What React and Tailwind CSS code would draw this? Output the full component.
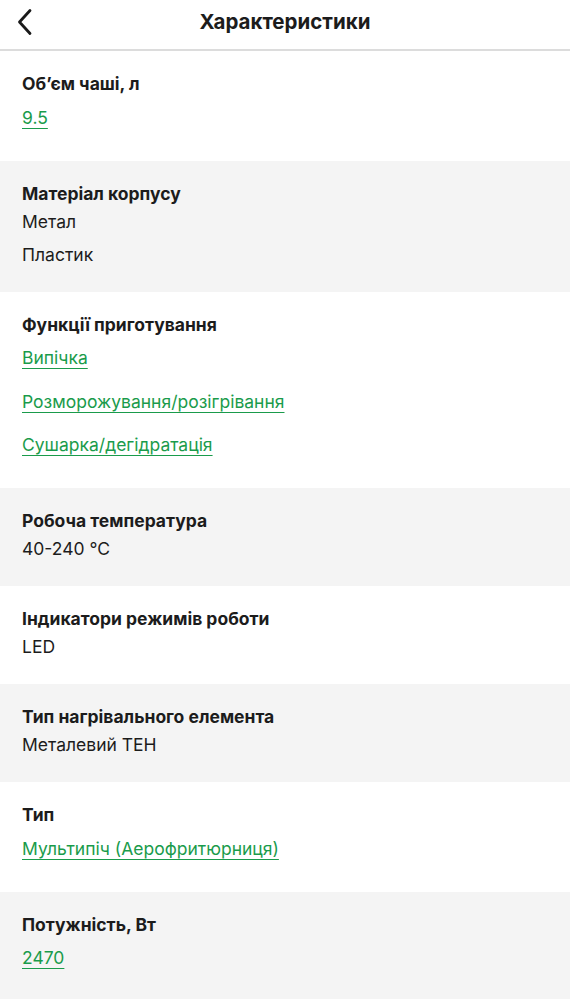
import { useState } from 'react';

const specs = [
    { title: 'Об’єм чаші, л', links: ['9.5'] },
    { title: 'Матеріал корпусу', values: ['Метал', 'Пластик'] },
    { title: 'Функції приготування', links: ['Випічка', 'Розморожування/розігрівання', 'Сушарка/дегідратація'] },
    { title: 'Робоча температура', values: ['40-240 °C'] },
    { title: 'Індикатори режимів роботи', values: ['LED'] },
    { title: 'Тип нагрівального елемента', values: ['Металевий ТЕН'] },
    { title: 'Тип', links: ['Мультипіч (Аерофритюрниця)'] },
    { title: 'Потужність, Вт', links: ['2470'] },
];

function BackIcon() {
    return (
        <svg width="22" height="28" viewBox="0 0 22 28" fill="none">
            <path d="M16 2.5 L5.5 14 L16 25.5" stroke="#1a1a1a" strokeWidth="2.8" strokeLinecap="round" strokeLinejoin="round" />
        </svg>
    );
}

export default function App() {
    const [items] = useState(specs);

    return (
        <div className="min-h-screen bg-white text-[#1c1c1c]" style={{ fontFamily: 'Inter, "Noto Sans", sans-serif' }}>
            <header className="relative h-[51px] flex items-center justify-center border-b-2 border-[#dcdcdc]">
                <button className="absolute left-[14px] top-[8px]">
                    <BackIcon />
                </button>
                <h1 className="text-[20.5px] font-bold leading-none -mt-1">Характеристики</h1>
            </header>

            {items.map((item, index) => (
                <section
                    key={item.title}
                    className={`px-[22px] pt-[21px] ${item.links ? 'pb-[21px]' : 'pb-[20px]'} ${index % 2 === 1 ? 'bg-[#f4f4f4]' : 'bg-white'}`}
                >
                    <h3 className="text-[17.5px] font-bold leading-[24px]">{item.title}</h3>
                    {item.values && item.values.map((value) => (
                        <div key={value} className="h-[33px] flex items-center text-[17.5px]">{value}</div>
                    ))}
                    {item.links && item.links.map((link) => (
                        <div key={link} className="h-[43.5px] flex items-center">
                            <a href="#" className="text-[17.5px] text-[#1a9b4b] underline underline-offset-[4px] decoration-1">
                                {link}
                            </a>
                        </div>
                    ))}
                </section>
            ))}
        </div>
    );
}
